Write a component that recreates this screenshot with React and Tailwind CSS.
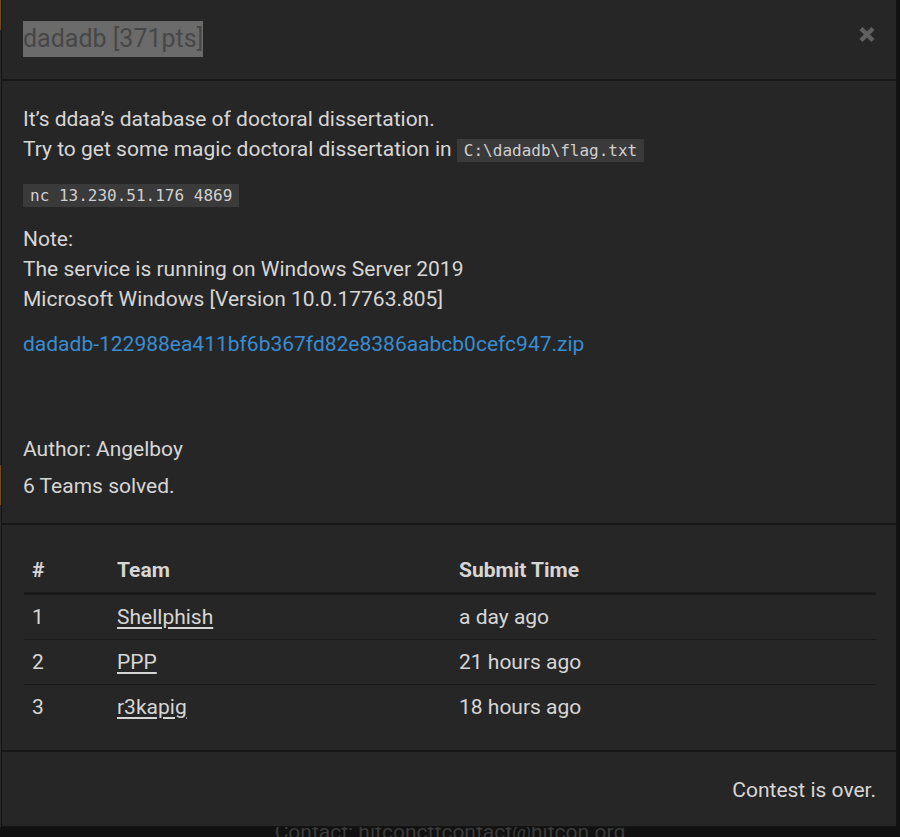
import React from "react";

const rows = [
  { n: "1", team: "Shellphish", time: "a day ago" },
  { n: "2", team: "PPP", time: "21 hours ago" },
  { n: "3", team: "r3kapig", time: "18 hours ago" },
];

const mono = { fontFamily: "'DejaVu Sans Mono', 'Liberation Mono', monospace" };

export default function App() {
  return (
    <div
      className="h-[837px] w-[900px] overflow-hidden bg-[#111111] text-[#d6d6d6]"
      style={{ fontFamily: "Roboto, 'Liberation Sans', sans-serif" }}
    >
      <div className="flex">
        <div className="flex w-[1px] flex-col">
          <div className="h-[30px] bg-[#7a4e05]" />
          <div className="h-[435px] bg-[#2a2a2a]" />
          <div className="h-[40px] bg-[#7a4e05]" />
          <div className="h-[322px] bg-[#2a2a2a]" />
        </div>
        <div className="relative z-10 flex w-[896px] flex-col border-x border-b border-[#141414] bg-[#262626]">
          {/* header */}
          <div className="flex items-start justify-between border-b-2 border-[#171717] pl-[21px] pr-[21px] pt-[21px] pb-[22px]">
            <span className="bg-[#6b6b6b] text-[25px] leading-[36px] text-[#474747]">
              dadadb [371pts]
            </span>
            <svg width="16" height="17" viewBox="0 0 16 17" className="mt-[5px]">
              <path d="M2 2.5 L14 14.5 M14 2.5 L2 14.5" stroke="#606060" strokeWidth="4.4" />
            </svg>
          </div>

          {/* body */}
          <div className="border-b-2 border-[#171717] px-[21px] pt-[23px] pb-[22px] text-[21px] leading-[30px]">
            <p>
              It’s ddaa’s database of doctoral dissertation.
              <br />
              Try to get some magic doctoral dissertation in{" "}
              <code className="bg-[#3a3a3a] px-[7px] py-[2px] text-[16px] leading-[20px] text-[#d0d0d0]" style={mono}>
                C:\dadadb\flag.txt
              </code>
            </p>
            <p className="mt-[15px] h-[30px]">
              <code className="bg-[#3a3a3a] px-[7px] py-[2px] text-[16px] leading-[20px] text-[#d0d0d0]" style={mono}>
                nc 13.230.51.176 4869
              </code>
            </p>
            <p className="mt-[15px]">
              Note:
              <br />
              The service is running on Windows Server 2019
              <br />
              Microsoft Windows [Version 10.0.17763.805]
            </p>
            <p className="mt-[15px]">
              <a className="text-[#3a8dd3]">dadadb-122988ea411bf6b367fd82e8386aabcb0cefc947.zip</a>
            </p>
            <p className="mt-[75px]">Author: Angelboy</p>
            <p className="mt-[7px]">6 Teams solved.</p>
          </div>

          {/* table */}
          <div className="border-b-2 border-[#171717] pl-[22px] pr-[20px] pt-[23px] pb-[21px] text-[21px] leading-[30px]">
            <table className="w-full border-collapse text-left">
              <thead>
                <tr className="border-b-[3px] border-[#191919]">
                  <th className="w-[85px] px-[8px] py-[7px] font-bold">#</th>
                  <th className="w-[342px] px-[8px] py-[7px] font-bold">Team</th>
                  <th className="px-[8px] py-[7px] font-bold">Submit Time</th>
                </tr>
              </thead>
              <tbody>
                {rows.map((r, i) => (
                  <tr key={r.n} className={i < rows.length - 1 ? "border-b border-[#1a1a1a]" : ""}>
                    <td className="px-[8px] py-[7px]">{r.n}</td>
                    <td className="px-[8px] py-[7px]">
                      <a className="underline underline-offset-[3px]">{r.team}</a>
                    </td>
                    <td className="px-[8px] py-[7px]">{r.time}</td>
                  </tr>
                ))}
              </tbody>
            </table>
          </div>

          {/* footer */}
          <div className="flex justify-end pr-[20px] pt-[23px] pb-[20px] text-[21px] leading-[30px]">
            Contest is over.
          </div>
        </div>
      </div>
      <div className="-mt-[7px] w-[900px] text-center text-[21px] leading-[24px] text-[#3c3c3c]">
        Contact: hitconctfcontact@hitcon.org
      </div>
    </div>
  );
}
